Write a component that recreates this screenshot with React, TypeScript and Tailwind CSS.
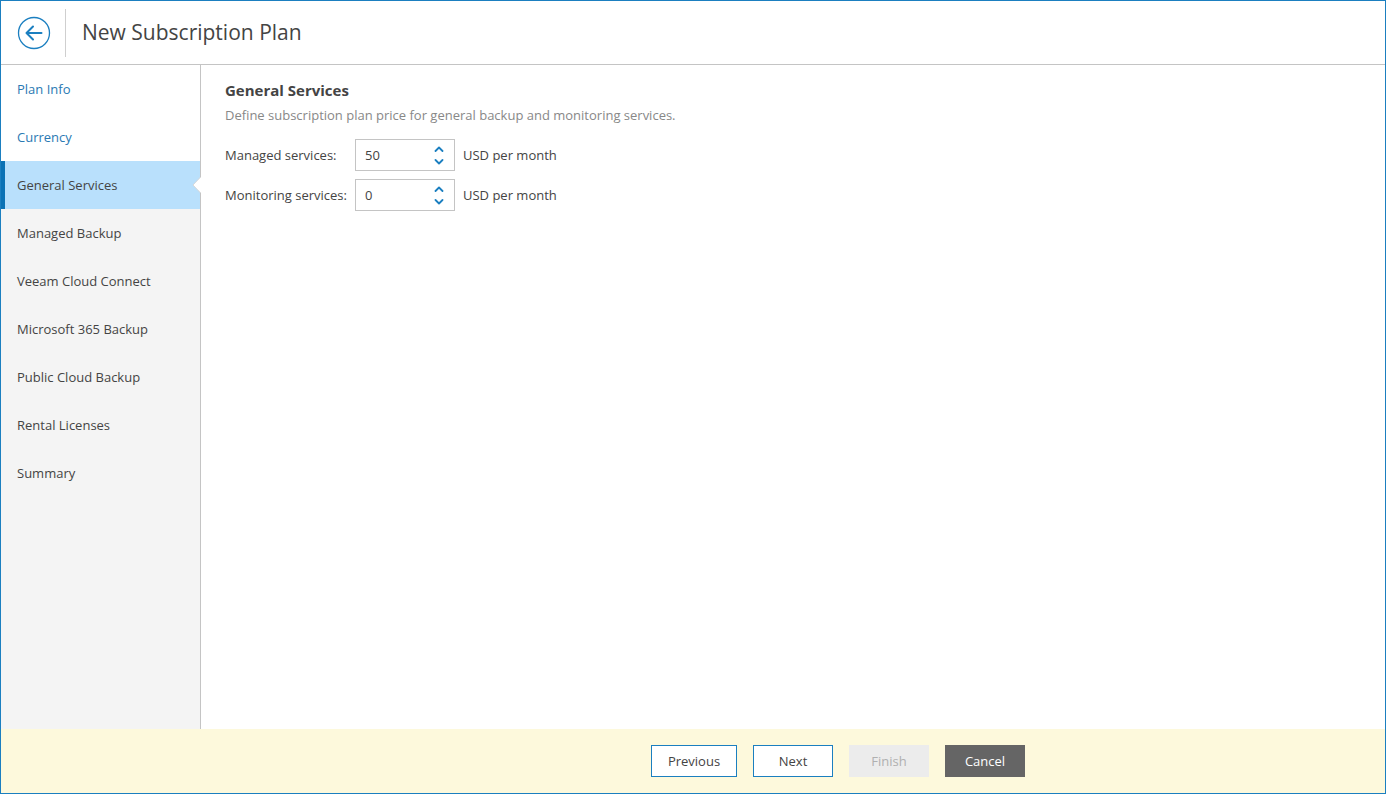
import React from 'react';

const steps = [
    { label: 'Plan Info', state: 'done' },
    { label: 'Currency', state: 'done' },
    { label: 'General Services', state: 'active' },
    { label: 'Managed Backup', state: 'todo' },
    { label: 'Veeam Cloud Connect', state: 'todo' },
    { label: 'Microsoft 365 Backup', state: 'todo' },
    { label: 'Public Cloud Backup', state: 'todo' },
    { label: 'Rental Licenses', state: 'todo' },
    { label: 'Summary', state: 'todo' },
];

const fields = [
    { label: 'Managed services:', value: '50' },
    { label: 'Monitoring services:', value: '0' },
];

function BackIcon() {
    return (
        <svg width="34" height="34" viewBox="0 0 34 34" fill="none">
            <circle cx="17" cy="17" r="15.5" stroke="#1b7fc0" strokeWidth="1.3" />
            <path d="M9.5 17 H24.5 M16 10.5 L9.5 17 L16 23.5" stroke="#1b7fc0" strokeWidth="2" strokeLinecap="round" strokeLinejoin="round" />
        </svg>
    );
}

function Spinner() {
    return (
        <div className="flex flex-col items-center gap-[7px] mr-[10px]">
            <svg width="10" height="6" viewBox="0 0 10 6" fill="none">
                <path d="M1.5 5 L5 1.5 L8.5 5" stroke="#1b7fc0" strokeWidth="1.8" strokeLinecap="round" strokeLinejoin="round" />
            </svg>
            <svg width="10" height="6" viewBox="0 0 10 6" fill="none">
                <path d="M1.5 1 L5 4.5 L8.5 1" stroke="#1b7fc0" strokeWidth="1.8" strokeLinecap="round" strokeLinejoin="round" />
            </svg>
        </div>
    );
}

export default function App() {
    return (
        <div
            className="w-[1386px] h-[794px] border border-[#1b7fc0] flex flex-col bg-white text-[#444] text-[13px]"
            style={{ fontFamily: '"Open Sans", "Noto Sans", sans-serif' }}
        >
            {/* Header */}
            <div className="h-[64px] shrink-0 border-b border-[#c4c4c4] flex items-center">
                <div className="w-[64px] flex justify-center pl-[1px]">
                    <BackIcon />
                </div>
                <div className="w-px h-[48px] bg-[#cfcfcf]" />
                <h1 className="ml-[16px] text-[21px] text-[#444] leading-none pb-[1px]">New Subscription Plan</h1>
            </div>

            <div className="flex flex-1 min-h-0">
                {/* Steps */}
                <div className="w-[200px] shrink-0 bg-[#f4f4f4] border-r border-[#c4c4c4] relative">
                    {steps.map((step) => (
                        <div
                            key={step.label}
                            className={`h-[48px] flex items-center pl-[16px] pt-[2px] relative ${
                                step.state === 'done'
                                    ? 'bg-white text-[#2a79b3]'
                                    : step.state === 'active'
                                        ? 'bg-[#b9e0fc] text-[#444]'
                                        : 'text-[#444]'
                            }`}
                        >
                            {step.state === 'active' && (
                                <>
                                    <div className="absolute left-0 top-0 bottom-0 w-[4px] bg-[#0b72b5]" />
                                    <svg className="absolute right-[-1px] top-[16px]" width="9" height="16" viewBox="0 0 9 16">
                                        <path d="M9 0 L1 8 L9 16 Z" fill="#ffffff" />
                                        <path d="M8.5 0 L1 8 L8.5 16" fill="none" stroke="#d8d8d8" strokeWidth="1" />
                                    </svg>
                                </>
                            )}
                            {step.label}
                        </div>
                    ))}
                </div>

                {/* Content */}
                <div className="flex-1 pl-[24px] pt-[15px]">
                    <h2 className="text-[15px] font-bold text-[#444] leading-[20px]">General Services</h2>
                    <p className="mt-[5px] text-[#888] leading-[20px]">
                        Define subscription plan price for general backup and monitoring services.
                    </p>
                    <div className="mt-[14px] flex flex-col gap-[8px]">
                        {fields.map((f) => (
                            <div key={f.label} className="flex items-center h-[32px]">
                                <span className="w-[130px] pt-[2px]">{f.label}</span>
                                <div className="w-[100px] h-[32px] border border-[#c4c4c4] flex items-center justify-between pl-[9px]">
                                    <span className="pt-[2px]">{f.value}</span>
                                    <Spinner />
                                </div>
                                <span className="ml-[8px] pt-[2px]">USD per month</span>
                            </div>
                        ))}
                    </div>
                </div>
            </div>

            {/* Footer */}
            <div className="h-[64px] shrink-0 bg-[#fdf9dc] flex items-center pl-[650px] gap-[16px]">
                <button className="w-[86px] h-[32px] pt-[2px] border border-[#1b7fc0] bg-white text-[#444]">Previous</button>
                <button className="w-[80px] h-[32px] pt-[2px] border border-[#1b7fc0] bg-white text-[#444]">Next</button>
                <button className="w-[80px] h-[32px] pt-[2px] bg-[#ececec] text-[#b0b0b0]">Finish</button>
                <button className="w-[80px] h-[32px] pt-[2px] bg-[#656565] text-white">Cancel</button>
            </div>
        </div>
    );
}
